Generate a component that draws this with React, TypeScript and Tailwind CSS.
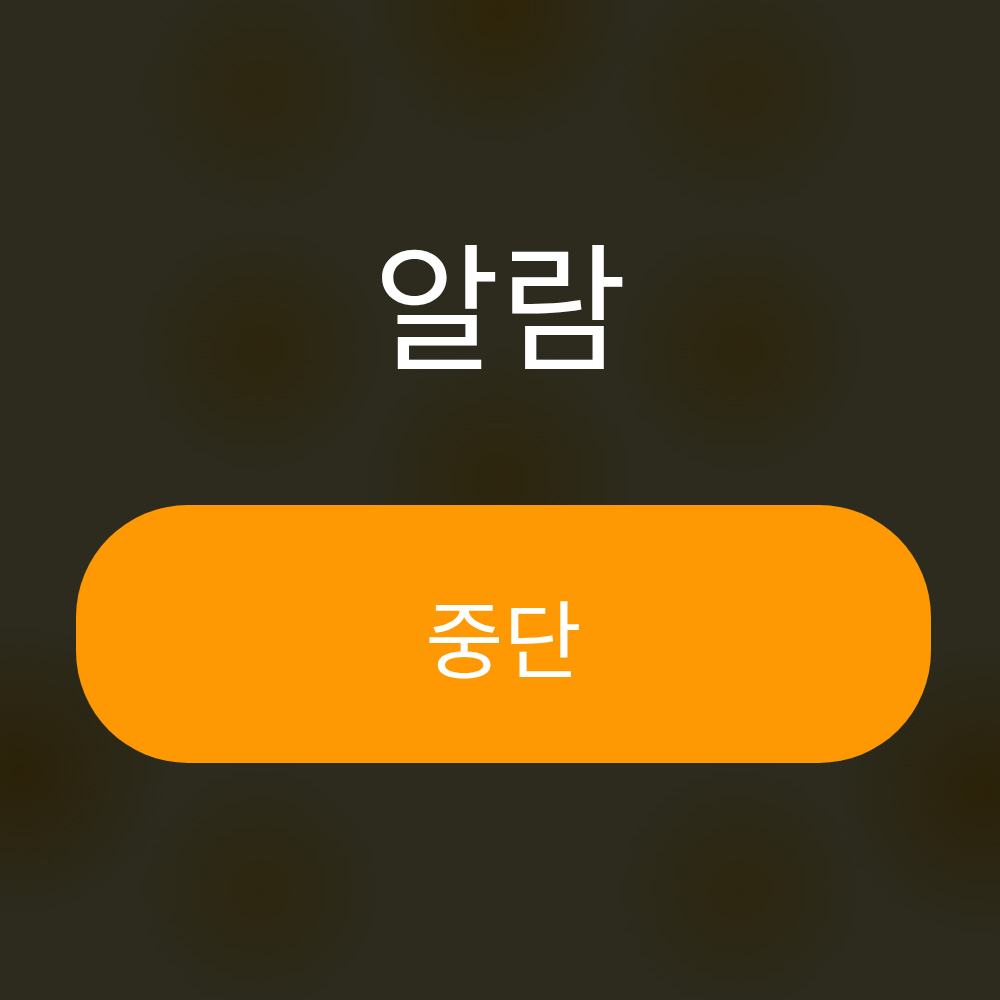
import React from 'react';

// Alarm alert screen: title plus a big stop button over a blurred backdrop
export default function App() {
  return (
    <div
      className="flex flex-col items-center w-full h-[1000px] overflow-hidden bg-[#2c2b1e] font-['Noto_Sans_CJK_KR','Noto_Sans',sans-serif] bg-[radial-gradient(circle_at_500px_10px,#2e2408_0,transparent_140px),radial-gradient(circle_at_260px_90px,#2d260f_0,transparent_130px),radial-gradient(circle_at_740px_90px,#2d260f_0,transparent_130px),radial-gradient(circle_at_260px_350px,#2d250c_0,transparent_130px),radial-gradient(circle_at_740px_350px,#2d250c_0,transparent_130px),radial-gradient(circle_at_500px_480px,#2d250c_0,transparent_140px),radial-gradient(circle_at_20px_770px,#2b2108_0,transparent_150px),radial-gradient(circle_at_985px_790px,#2b2108_0,transparent_150px),radial-gradient(circle_at_260px_890px,#2d260f_0,transparent_130px),radial-gradient(circle_at_740px_890px,#2d260f_0,transparent_130px)]"
    >
      <h1 className="pt-[230px] text-[138px] leading-none font-normal text-white">알람</h1>
      <div className="w-full pl-[76px] pr-[69px] pt-[137px]">
        <button className="flex items-center justify-center w-full h-[258px] rounded-[112px] bg-[#ff9903] text-white text-[85px] leading-none font-normal">
          중단
        </button>
      </div>
    </div>
  );
}
